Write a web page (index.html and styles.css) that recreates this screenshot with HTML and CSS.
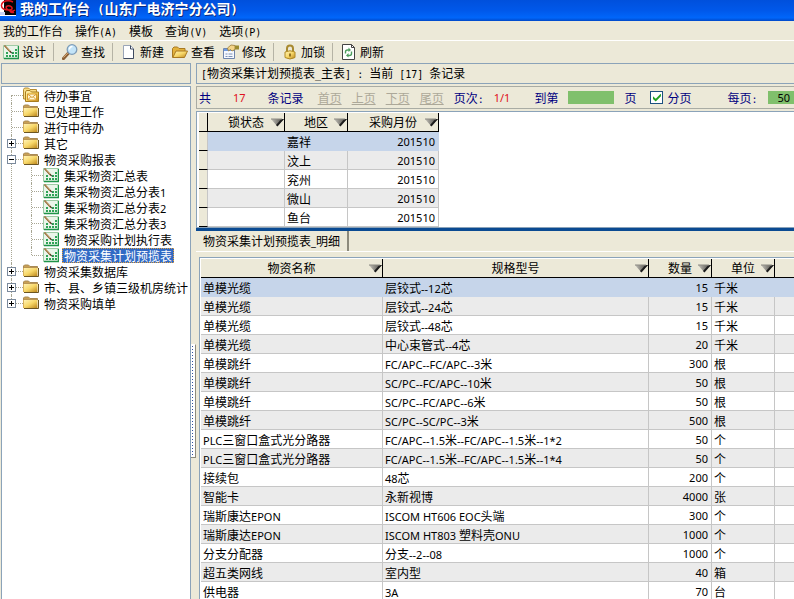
FILE: index.html
```
<!DOCTYPE html>
<html lang="zh-CN">
<head>
  <meta charset="UTF-8">
  <meta name="viewport" content="width=device-width, initial-scale=1.0">
  <title>我的工作台</title>
  <link rel="stylesheet" href="styles.css">
</head>
<body>

  <!-- shared icons -->
  <svg class="sprite" aria-hidden="true">
    <defs>
      <linearGradient id="gold" x1="0" y1="0" x2="1" y2="1">
        <stop offset="0" stop-color="#fff3b8"/>
        <stop offset="0.5" stop-color="#f7d768"/>
        <stop offset="1" stop-color="#bd871c"/>
      </linearGradient>
      <linearGradient id="tri" x1="0" y1="0" x2="1" y2="0">
        <stop offset="0" stop-color="#c4c2ba"/>
        <stop offset="0.6" stop-color="#77756f"/>
        <stop offset="1" stop-color="#333"/>
      </linearGradient>
    </defs>
    <symbol id="i-folder" viewBox="0 0 16 16">
      <path d="M.5 4V3L1.500 2h4L7 3.500h7.500V5H.5z" fill="#c9a055" stroke="#a98a55"/>
      <path d="M.5 5h14v8H.5z" fill="url(#gold)"/>
      <path d="M.5 5v8" stroke="#d8b05a"/>
      <path d="M1 13.500h14.500V5" fill="none" stroke="#6b5523"/>
    </symbol>
    <symbol id="i-mail" viewBox="0 0 16 16">
      <path d="M.5 2.500 1.500 1h4L7 2.500h6.500V12H.5z" fill="#f8dd86" stroke="#b58c33"/>
      <path d="M2.500 5 3.500 3.500h3.500L8.500 5h7v9.500h-13z" fill="url(#gold)" stroke="#a87d20"/>
      <path d="M4.500 7h9v6h-9z" fill="#fff6d6" stroke="#d79a2b"/>
      <path d="M4.500 7 9 10.500 13.500 7M4.500 13l3-3M13.500 13l-3-3" fill="none" stroke="#d79a2b"/>
    </symbol>
    <symbol id="i-form" viewBox="0 0 16 16">
      <path d="M.5 1.500h15v13H.5z" fill="#eaf5ea" stroke="#9fcba5"/>
      <path d="M1 14.500h14.500V2" fill="none" stroke="#1f9449" stroke-width="1.500"/>
      <path d="M3 11h2v2H3zM6 11h2v2H6zM9 11h2v2H9zM12 11h2v2h-2zM9 8h2v2H9zM12 8h2v2h-2zM12 5h2v2h-2zM3 8h2v2H3z" fill="#2fa457"/>
      <path d="M1.500 1.500 8 8.500" stroke="#8a5a28" stroke-width="1.600"/>
      <path d="M2 1.500 7 7" stroke="#e8c48c" stroke-width=".6"/>
      <path d="m7.500 7.500 1.500 2" stroke="#222"/>
    </symbol>
    <symbol id="i-tri" viewBox="0 0 13 9">
      <path d="M0 1h13L6 8z" fill="url(#tri)"/>
      <path d="M13 1 6.500 8.500 5 7l5-5.500z" fill="#1c1c1c"/>
      <path d="M0 1h11" stroke="#8b8982"/>
    </symbol>
  </svg>

  <header class="titlebar">
    <svg class="logo" viewBox="0 0 16 16" aria-hidden="true">
      <path d="M0 0h16v16H0z" fill="#fff"/>
      <path d="M4 0h12v15H4z" fill="#050505"/>
      <path d="M13 2C8-.5 2 1 1.500 5S5 10 9 10s4-3 1-4-5 1-3 3 5 3 8 1M9 10c1 1.500 3 3 5 2" fill="none" stroke="#e0141c" stroke-width="1.500"/>
      <path d="M0 12h5v3H0z" fill="#c8d4f4"/>
    </svg>
    <h1>我的工作台<span class="wide"> (</span>山东广电济宁分公司<span class="wide">)</span></h1>
  </header>

  <nav class="menu">
    <button>我的工作台</button>
    <button>操作<span class="mono">(A)</span></button>
    <button>模板</button>
    <button>查询<span class="mono">(V)</span></button>
    <button>选项<span class="mono">(P)</span></button>
  </nav>

  <div class="toolbar">
    <button><svg class="icon"><use href="#i-form"/></svg>设计</button>
    <span class="sep"></span>
    <button>
      <svg class="icon" viewBox="0 0 16 16">
        <path d="M1.500 14.500 6.500 9" stroke="#8b5f35" stroke-width="3.200" stroke-linecap="round"/>
        <path d="M1.500 13.500 6 8.800" stroke="#dcae78" stroke-width="1"/>
        <circle cx="10" cy="5.500" r="4.800" fill="#c3e4f8" stroke="#7d9cb8" stroke-width="1.300"/>
        <path d="M7.500 5.500A2.800 2.800 0 0 1 10.500 2.500" fill="none" stroke="#fff" stroke-width="1.500"/>
      </svg>查找
    </button>
    <span class="sep"></span>
    <button>
      <svg class="icon" viewBox="0 0 16 16">
        <path d="M2.500 1.500h7l3 3v10h-10z" fill="#fff" stroke="#9aa5b8"/>
        <path d="M9.500 1.500v3.500h3v9.500h-10" fill="none" stroke="#3f4a60"/>
      </svg>新建
    </button>
    <button>
      <svg class="icon" viewBox="0 0 16 16">
        <path d="M.5 13.500v-9L2 3h3.500L7 4.500h6V8" fill="#e3b23c" stroke="#a87922"/>
        <path d="M.8 13.500 4 7h11.500L12.500 13.500z" fill="url(#gold)" stroke="#a87922"/>
      </svg>查看
    </button>
    <button>
      <svg class="icon" viewBox="0 0 16 16">
        <path d="M.5 4.500h11v10H.5z" fill="#f6f9ff" stroke="#6f86ad"/>
        <path d="M1 5h10v2H1z" fill="#6f9be0"/>
        <path d="M2.500 10h2M2.500 12.500h2M5.500 10h4M5.500 12.500h4" stroke="#7d92b5"/>
        <path d="M4.500 4 8 1l4 .5v4L9 7 7.500 5.500 5.500 7z" fill="#f4d488" stroke="#9a7a36" stroke-width=".8"/>
        <path d="M12 1.500h4v4h-4z" fill="#9b8a2f"/>
      </svg>修改
    </button>
    <span class="sep"></span>
    <button>
      <svg class="icon" viewBox="0 0 16 16">
        <path d="M5 8V4.500a3 3 0 0 1 6 0V8" fill="none" stroke="#a8892f" stroke-width="2"/>
        <path d="M3 8q5-2.500 10 0v5.500q-5 3-10 0z" fill="url(#gold)" stroke="#b08a25"/>
        <path d="M8 9.500v3" stroke="#7a5a12" stroke-width="1.600"/>
      </svg>加锁
    </button>
    <span class="sep"></span>
    <button>
      <svg class="icon" viewBox="0 0 16 16">
        <path d="M1.500.5h9l3 3v12h-12z" fill="#fff" stroke="#444"/>
        <path d="M10.500.5v3h3" fill="none" stroke="#444"/>
        <path d="M4.500 9.500V8q0-2 2-2H8M10.500 7.500v2q0 2-2 2H7" fill="none" stroke="#4d9e5e" stroke-width="1.400"/>
        <path d="m7.500 3.500 2.500 2.500-2.500 2zM7.500 9 5 11.500l2.500 2z" fill="#4d9e5e"/>
      </svg>刷新
    </button>
  </div>

  <div class="shell">
    <aside class="side">
      <div class="side-head"></div>
      <ul class="tree">
        <li><div class="node"><span class="slot"></span><svg class="icon"><use href="#i-mail"/></svg><a href="#">待办事宜</a></div></li>
        <li><div class="node"><span class="slot"></span><svg class="icon"><use href="#i-folder"/></svg><a href="#">已处理工作</a></div></li>
        <li><div class="node"><span class="slot"></span><svg class="icon"><use href="#i-folder"/></svg><a href="#">进行中待办</a></div></li>
        <li><div class="node"><span class="slot"><button class="toggle" aria-label="展开"></button></span><svg class="icon"><use href="#i-folder"/></svg><a href="#">其它</a></div></li>
        <li>
          <div class="node"><span class="slot"><button class="toggle open" aria-label="收起"></button></span><svg class="icon"><use href="#i-folder"/></svg><a href="#">物资采购报表</a></div>
          <ul>
            <li><div class="node"><span class="slot"></span><svg class="icon"><use href="#i-form"/></svg><a href="#">集采物资汇总表</a></div></li>
            <li><div class="node"><span class="slot"></span><svg class="icon"><use href="#i-form"/></svg><a href="#">集采物资汇总分表<span class="en">1</span></a></div></li>
            <li><div class="node"><span class="slot"></span><svg class="icon"><use href="#i-form"/></svg><a href="#">集采物资汇总分表<span class="en">2</span></a></div></li>
            <li><div class="node"><span class="slot"></span><svg class="icon"><use href="#i-form"/></svg><a href="#">集采物资汇总分表<span class="en">3</span></a></div></li>
            <li><div class="node"><span class="slot"></span><svg class="icon"><use href="#i-form"/></svg><a href="#">物资采购计划执行表</a></div></li>
            <li><div class="node"><span class="slot"></span><svg class="icon"><use href="#i-form"/></svg><a class="selected" href="#">物资采集计划预揽表</a></div></li>
          </ul>
        </li>
        <li><div class="node"><span class="slot"><button class="toggle" aria-label="展开"></button></span><svg class="icon"><use href="#i-folder"/></svg><a href="#">物资采集数据库</a></div></li>
        <li><div class="node"><span class="slot"><button class="toggle" aria-label="展开"></button></span><svg class="icon"><use href="#i-folder"/></svg><a href="#">市、县、乡镇三级机房统计</a></div></li>
        <li><div class="node"><span class="slot"><button class="toggle" aria-label="展开"></button></span><svg class="icon"><use href="#i-folder"/></svg><a href="#">物资采购填单</a></div></li>
      </ul>
    </aside>

    <div class="splitter"><span class="grip"></span></div>

    <main class="main">
      <div class="status"><span class="mono">[</span>物资采集计划预揽表<span class="mono">_</span>主表<span class="mono">] : </span>当前<span class="mono"> [17] </span>条记录</div>

      <div class="pager">
        <span>共</span>
        <span class="red total">17</span>
        <span>条记录</span>
        <a class="first" href="#">首页</a>
        <a href="#">上页</a>
        <a href="#">下页</a>
        <a href="#">尾页</a>
        <span>页次<span class="mono">:</span></span>
        <span class="red">1/1</span>
        <label class="goto" for="page">到第</label>
        <input type="text" id="page">
        <span>页</span>
        <label class="check"><input type="checkbox" checked>分页</label>
        <label class="per" for="size">每页<span class="mono">:</span></label>
        <input type="text" id="size" value="50">
      </div>

      <div class="grid-box">
        <table class="grid master">
          <thead>
            <tr>
              <th class="c-mark"></th>
              <th class="c-lock"><div class="head"><span>锁状态</span><button aria-label="筛选"><svg><use href="#i-tri"/></svg></button></div></th>
              <th class="c-unit"><div class="head"><span>地区</span><button aria-label="筛选"><svg><use href="#i-tri"/></svg></button></div></th>
              <th class="c-month"><div class="head"><span>采购月份</span><button aria-label="筛选"><svg><use href="#i-tri"/></svg></button></div></th>
            </tr>
          </thead>
          <tbody>
            <tr class="current"><th></th><td></td><td>嘉祥</td><td class="num">201510</td></tr>
            <tr><th></th><td></td><td>汶上</td><td class="num">201510</td></tr>
            <tr><th></th><td></td><td>兖州</td><td class="num">201510</td></tr>
            <tr><th></th><td></td><td>微山</td><td class="num">201510</td></tr>
            <tr><th></th><td></td><td>鱼台</td><td class="num">201510</td></tr>
          </tbody>
        </table>
      </div>

      <div class="divider"></div>

      <div class="tabs"><button>物资采集计划预揽表<span class="en">_</span>明细</button></div>

      <div class="grid-box detail-box">
        <table class="grid detail">
          <thead>
            <tr>
              <th class="c-name"><div class="head"><span>物资名称</span><button aria-label="筛选"><svg><use href="#i-tri"/></svg></button></div></th>
              <th><div class="head"><span>规格型号</span><button aria-label="筛选"><svg><use href="#i-tri"/></svg></button></div></th>
              <th class="c-unit"><div class="head"><span>数量</span><button aria-label="筛选"><svg><use href="#i-tri"/></svg></button></div></th>
              <th class="c-unit"><div class="head"><span>单位</span><button aria-label="筛选"><svg><use href="#i-tri"/></svg></button></div></th>
              <th class="c-rest"></th>
            </tr>
          </thead>
          <tbody>
            <tr class="current"><td>单模光缆</td><td>层铰式<span class="en">--12</span>芯</td><td class="num">15</td><td>千米</td><td></td></tr>
            <tr><td>单模光缆</td><td>层铰式<span class="en">--24</span>芯</td><td class="num">15</td><td>千米</td><td></td></tr>
            <tr><td>单模光缆</td><td>层铰式<span class="en">--48</span>芯</td><td class="num">15</td><td>千米</td><td></td></tr>
            <tr><td>单模光缆</td><td>中心束管式<span class="en">--4</span>芯</td><td class="num">20</td><td>千米</td><td></td></tr>
            <tr><td>单模跳纤</td><td><span class="en">FC/APC--FC/APC--3</span>米</td><td class="num">300</td><td>根</td><td></td></tr>
            <tr><td>单模跳纤</td><td><span class="en">SC/PC--FC/APC--10</span>米</td><td class="num">50</td><td>根</td><td></td></tr>
            <tr><td>单模跳纤</td><td><span class="en">SC/PC--FC/APC--6</span>米</td><td class="num">50</td><td>根</td><td></td></tr>
            <tr><td>单模跳纤</td><td><span class="en">SC/PC--SC/PC--3</span>米</td><td class="num">500</td><td>根</td><td></td></tr>
            <tr><td><span class="en">PLC</span>三窗口盒式光分路器</td><td><span class="en">FC/APC--1.5</span>米<span class="en">--FC/APC--1.5</span>米<span class="en">--1*2</span></td><td class="num">50</td><td>个</td><td></td></tr>
            <tr><td><span class="en">PLC</span>三窗口盒式光分路器</td><td><span class="en">FC/APC--1.5</span>米<span class="en">--FC/APC--1.5</span>米<span class="en">--1*4</span></td><td class="num">50</td><td>个</td><td></td></tr>
            <tr><td>接续包</td><td><span class="en">48</span>芯</td><td class="num">200</td><td>个</td><td></td></tr>
            <tr><td>智能卡</td><td>永新视博</td><td class="num">4000</td><td>张</td><td></td></tr>
            <tr><td>瑞斯康达<span class="en">EPON</span></td><td><span class="en">ISCOM HT606 EOC</span>头端</td><td class="num">300</td><td>个</td><td></td></tr>
            <tr><td>瑞斯康达<span class="en">EPON</span></td><td><span class="en">ISCOM HT803 </span>塑料壳<span class="en">ONU</span></td><td class="num">1000</td><td>个</td><td></td></tr>
            <tr><td>分支分配器</td><td>分支<span class="en">--2--08</span></td><td class="num">1000</td><td>个</td><td></td></tr>
            <tr><td>超五类网线</td><td>室内型</td><td class="num">40</td><td>箱</td><td></td></tr>
            <tr><td>供电器</td><td><span class="en">3A</span></td><td class="num">70</td><td>台</td><td></td></tr>
          </tbody>
        </table>
      </div>
    </main>
  </div>

</body>
</html>
```

FILE: styles.css
```
:root {
  --face: #ece9d8;
  --line: #8ba3b9;
  --grid-line: #c6c6c6;
  --stripe: #ebebeb;
  --current: #c6d5ea;
  --select: #316ac5;
  --green: #80c06c;
  --navy: #000080;
}

* {
  box-sizing: border-box;
}

body {
  margin: 0;
  height: 100vh;
  display: flex;
  flex-direction: column;
  overflow: hidden;
  background: var(--face);
  color: #000;
  font-family: "Noto Sans CJK SC", sans-serif;
  font-size: 12px;
  line-height: 16px;
  white-space: nowrap;
}

button {
  margin: 0;
  padding: 0;
  border: none;
  background: none;
  color: inherit;
  font: inherit;
}

ul {
  list-style: none;
  margin: 0;
  padding: 0;
}

.sprite {
  position: absolute;
  width: 0;
  height: 0;
}

.icon {
  width: 16px;
  height: 16px;
  flex: none;
}

.en {
  font-family: "Noto Sans", sans-serif;
  font-size: 11px;
  line-height: 1;
}

.mono {
  font-family: "DejaVu Sans Mono", monospace;
  font-size: 10px;
  line-height: 1;
  white-space: pre;
}

/* title, menu, toolbar */
.titlebar {
  flex: none;
  height: 21px;
  display: flex;
  align-items: flex-start;
  gap: 4px;
  background: linear-gradient(#0050dc, #0058ea 50%, #0066fa 85%, #0048c8);
  color: #fff;
}

.logo {
  width: 16px;
  height: 16px;
}

.titlebar h1 {
  margin: 0;
  font-size: 14px;
  line-height: 17px;
  font-weight: bold;
  text-shadow: 1px 1px #0a2a80;
}

.wide {
  font-family: "DejaVu Sans Mono", monospace;
  font-size: 12px;
  line-height: 1;
}

.menu {
  flex: none;
  height: 20px;
  padding: 0 3px;
  display: flex;
  align-items: center;
  gap: 12px;
  border-bottom: 1px solid #fff;
}

.toolbar {
  flex: none;
  height: 22px;
  display: flex;
  align-items: center;
  gap: 2px;
}

.toolbar button {
  display: flex;
  align-items: center;
  gap: 3px;
  padding: 0 3px;
}

.sep {
  width: 1px;
  height: 18px;
  margin: 0 3px 0 2px;
  background: #b5b3a5;
}

/* left side */
.shell {
  flex: 1;
  min-height: 0;
  display: flex;
}

.side {
  flex: none;
  width: 191px;
  padding-left: 1px;
  display: flex;
  flex-direction: column;
  gap: 2px;
}

.side-head {
  height: 21px;
  border: 1px solid var(--line);
}

.tree {
  flex: 1;
  overflow: hidden;
  background: #fff;
  border: 1px solid var(--line);
  border-bottom: none;
}

.tree li {
  position: relative;
}

.tree li::before {
  content: "";
  position: absolute;
  top: 0;
  bottom: 0;
  left: 9px;
  border-left: 1px dotted #a8a693;
}

.tree li:first-child::before {
  top: 8px;
}

.tree li:last-child::before {
  bottom: auto;
  height: 8px;
}

.tree ul li:first-child::before {
  top: 0;
}

.tree ul {
  padding-left: 20px;
}

.node {
  display: flex;
  align-items: center;
  height: 16px;
}

.node .icon {
  position: relative;
}

.slot {
  flex: none;
  width: 21px;
  padding-left: 5px;
  display: flex;
  align-items: center;
  background: linear-gradient(90deg, #a8a693 50%, transparent 50%) 10px 8px / 2px 1px repeat-x;
  background-clip: content-box;
  position: relative;
}

.slot:has(.toggle) {
  background-position-y: 4px;
}

.slot:empty {
  height: 16px;
  padding-left: 9px;
}

.toggle {
  width: 9px;
  height: 9px;
  border: 1px solid #7b8a9c;
  background: linear-gradient(#000, #000) 1px 3px / 5px 1px no-repeat, linear-gradient(#000, #000) 3px 1px / 1px 5px no-repeat, #fff;
}

.toggle.open {
  background: linear-gradient(#000, #000) 1px 3px / 5px 1px no-repeat, #fff;
}

.tree a {
  margin-left: 3px;
  padding: 0 2px;
  line-height: 15px;
  color: #000;
  text-decoration: none;
}

.tree a.selected {
  background: var(--select);
  color: #fff;
  outline: 1px dotted #e0a040;
  outline-offset: -1px;
}

.splitter {
  flex: none;
  width: 5px;
  display: flex;
  align-items: center;
}

.grip {
  width: 5px;
  height: 114px;
  margin-top: 140px;
  border: 1px solid #8c8a7c;
  border-top-color: #fff;
  border-left: none;
  background: radial-gradient(circle, #2f4fa0 1px, #fff 1px) 0 0 / 3px 3px;
}

/* right side */
.main {
  flex: 1;
  min-width: 0;
  display: flex;
  flex-direction: column;
}

.status,
.pager {
  flex: none;
  margin-bottom: 2px;
  border: 1px solid var(--line);
  border-right: none;
}

.status {
  height: 21px;
  padding-left: 4px;
  line-height: 18px;
}

.pager {
  height: 23px;
  padding-left: 2px;
  display: flex;
  align-items: center;
  gap: 10px;
  overflow: hidden;
  border-color: #a9aca4;
  color: var(--navy);
}

.pager > * {
  flex: none;
}

.pager .red {
  color: #e01020;
  font-family: "Noto Sans", sans-serif;
  font-size: 11px;
}

.pager .total {
  margin: 0 12px;
}

.pager a {
  color: #aca899;
}

.pager .first {
  margin-left: 4px;
}

.pager .goto {
  margin-left: 14px;
}

.pager .per {
  margin-left: 26px;
}

.pager input[type="text"] {
  width: 46px;
  height: 13px;
  padding: 0 10px;
  border: none;
  background: var(--green);
  font-family: "Noto Sans", sans-serif;
  font-size: 11px;
}

.check {
  display: flex;
  align-items: center;
  gap: 4px;
  margin-left: 4px;
}

.check input {
  appearance: none;
  width: 13px;
  height: 13px;
  margin: 0;
  display: grid;
  place-items: center;
  border: 1px solid #1c5180;
  background: #fff;
}

.check input:checked::before {
  content: "";
  width: 8px;
  height: 8px;
  background: #21a121;
  clip-path: polygon(0 35%, 35% 65%, 100% 0, 100% 35%, 35% 100%, 0 70%);
}

.grid-box {
  flex: none;
  padding: 1px 2px 0;
  background: #fff;
  border: 1px solid var(--line);
  border-right: none;
}

.grid {
  border-collapse: separate;
  border-spacing: 0;
  table-layout: fixed;
}

.grid th,
.grid td {
  height: 19px;
  padding: 1px 3px 0 2px;
  overflow: hidden;
  font-weight: normal;
  line-height: 16px;
}

.grid th {
  padding: 0;
  background: var(--face);
  border-right: 1px solid #000;
  border-bottom: 1px solid #000;
}

.grid tbody th {
  border-right-color: var(--grid-line);
}

.grid td {
  border-right: 1px solid var(--grid-line);
  border-bottom: 1px solid var(--grid-line);
}

.grid tr:nth-child(even) td {
  background: var(--stripe);
}

.grid .current td {
  background: var(--current);
  border-color: var(--current);
}

.grid .num {
  text-align: right;
  font-family: "Noto Sans", sans-serif;
  font-size: 11px;
}

.head {
  display: grid;
  grid-template-columns: 13px 1fr 13px;
  align-items: center;
}

.head span {
  grid-column: 2;
}

.head button,
.head svg {
  display: block;
  width: 13px;
  height: 9px;
}

.master {
  width: 240px;
}

.detail {
  width: 100%;
}

.detail tr > :last-child {
  border-right: none;
}

.c-mark { width: 9px; }
.c-lock { width: 77px; }
.c-unit { width: 63px; }
.c-month { width: 91px; }
.c-name { width: 182px; }
.c-rest { width: 19px; }

.divider {
  flex: none;
  height: 3px;
  background: #0a4a92;
}

.tabs {
  flex: none;
  height: 21px;
  margin-bottom: 5px;
  display: flex;
  border-bottom: 1px solid #fff;
}

.tabs button {
  height: 20px;
  padding: 0 7px 0 7px;
  background: var(--face);
  border-right: 2px solid #8c8a7c;
}

.detail-box {
  flex: 1;
  min-height: 0;
  margin-left: 3px;
  padding: 1px 0 0 1px;
  overflow: hidden;
  border-bottom: none;
}
```
